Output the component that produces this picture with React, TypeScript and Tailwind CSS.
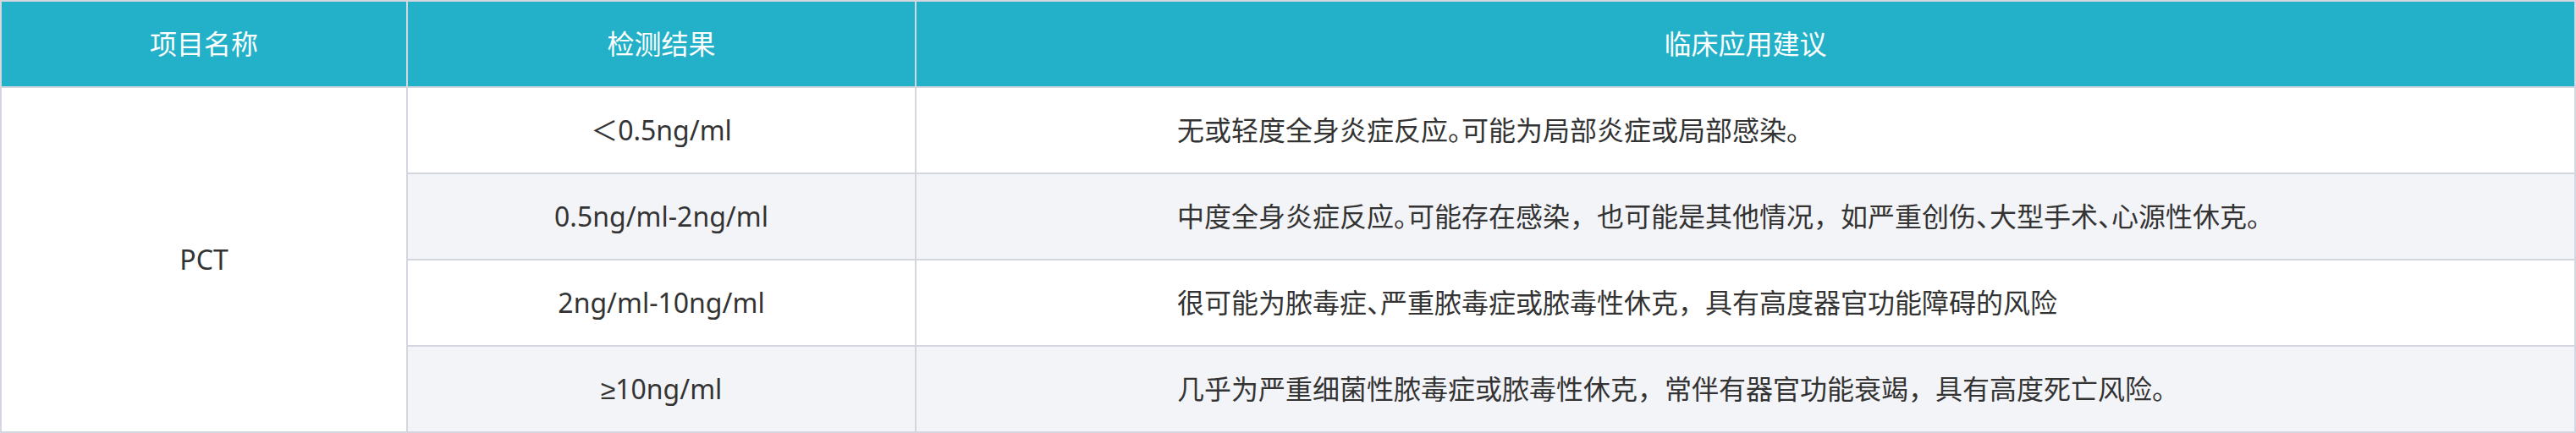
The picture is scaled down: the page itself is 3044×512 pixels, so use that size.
import React from "react";

const rows = [
  { v: "＜0.5ng/ml", t: "无或轻度全身炎症反应。可能为局部炎症或局部感染。" },
  { v: "0.5ng/ml-2ng/ml", t: "中度全身炎症反应。可能存在感染，也可能是其他情况，如严重创伤、大型手术、心源性休克。" },
  { v: "2ng/ml-10ng/ml", t: "很可能为脓毒症、严重脓毒症或脓毒性休克，具有高度器官功能障碍的风险" },
  { v: "≥10ng/ml", t: "几乎为严重细菌性脓毒症或脓毒性休克，常伴有器官功能衰竭，具有高度死亡风险。" },
];

function Txt({ s }: { s: string }) {
  const parts = s.split(/([。、])/);
  return (
    <>
      {parts.map((p, i) =>
        p === "。" || p === "、" ? (
          <span key={i} className="[font-feature-settings:'halt']">
            {p}
          </span>
        ) : (
          <span key={i}>{p}</span>
        )
      )}
    </>
  );
}

function Val({ s }: { s: string }) {
  if (s.startsWith("≥")) {
    return (
      <span>
        <span className="font-['Liberation_Sans',sans-serif]">≥</span>
        {s.slice(1)}
      </span>
    );
  }
  return <span>{s}</span>;
}

export default function App() {
  return (
    <div
      className="w-[3044px] h-[512px] bg-[#d5d7e0] p-[2px] grid grid-cols-[478px_599px_1fr] grid-rows-[100px_100px_100px_100px_100px] gap-[2px] text-[32px] text-[#333333]"
      style={{ fontFamily: '"Noto Sans", "Noto Sans CJK SC", sans-serif' }}
    >
      <div className="bg-[#22b1c8] text-white flex items-center justify-center">项目名称</div>
      <div className="bg-[#22b1c8] text-white flex items-center justify-center">检测结果</div>
      <div className="bg-[#22b1c8] text-white flex items-center justify-center">临床应用建议</div>
      <div className="bg-white row-span-4 flex items-center justify-center">PCT</div>
      {rows.map((r, i) => (
        <React.Fragment key={i}>
          <div className={`${i % 2 === 1 ? "bg-[#f3f4f8]" : "bg-white"} flex items-center justify-center`}>
            <Val s={r.v} />
          </div>
          <div className={`${i % 2 === 1 ? "bg-[#f3f4f8]" : "bg-white"} flex items-center pl-[308px] whitespace-nowrap`}>
            <span>
              <Txt s={r.t} />
            </span>
          </div>
        </React.Fragment>
      ))}
    </div>
  );
}
